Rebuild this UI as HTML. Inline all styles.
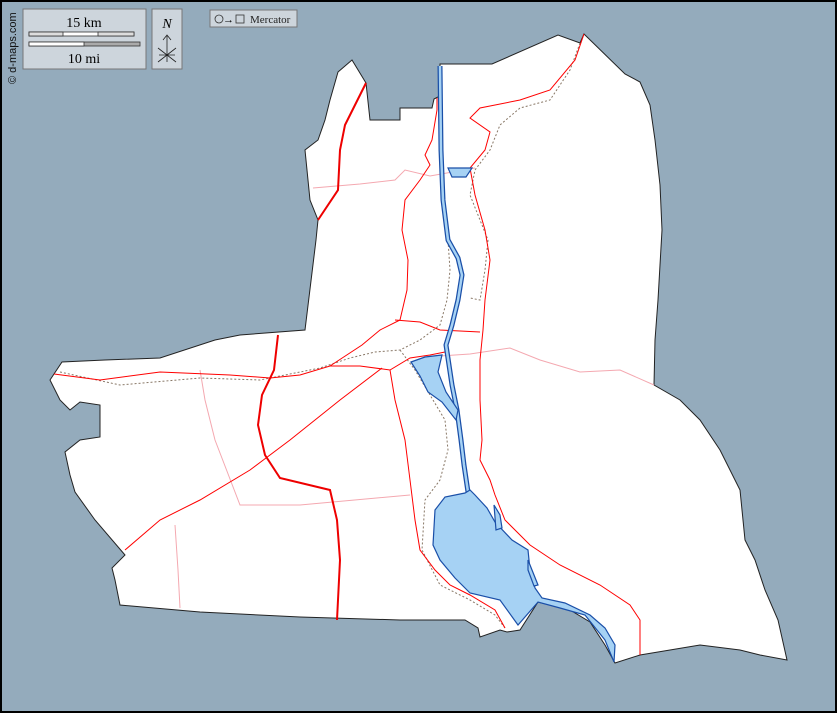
<!DOCTYPE html>
<html><head><meta charset="utf-8"><style>
html,body{margin:0;padding:0;background:#000;}
svg{display:block}
text{font-family:"Liberation Serif",serif}
</style></head><body>
<svg width="837" height="713" viewBox="0 0 837 713" xmlns="http://www.w3.org/2000/svg">
<rect x="0" y="0" width="837" height="713" fill="#000"/>
<rect x="2" y="2" width="833" height="709" fill="#94abbc"/>
<path d="M338,72 L352,60 L366,83 L370,120 L400,120 L400,108 L432,108 L434,99 L440,96 L440,64 L492,64 L558,35 L580,43 L584,34 L625,74 L640,82 L650,105 L655,140 L660,185 L662,230 L658,300 L655,340 L654,385 L680,400 L700,420 L720,450 L740,490 L745,540 L755,560 L765,590 L778,620 L787,660 L760,655 L740,650 L700,645 L640,655 L615,663 L605,645 L590,622 L570,610 L538,602 L520,630 L507,632 L500,630 L480,637 L478,628 L465,620 L400,620 L300,617 L200,612 L120,605 L115,580 L112,568 L125,555 L95,520 L75,492 L70,475 L65,452 L80,440 L100,437 L100,405 L80,402 L70,410 L60,400 L50,380 L62,362 L105,360 L160,358 L215,340 L240,335 L305,330 L316,240 L318,220 L310,200 L305,150 L318,140 L325,120 L330,100 Z" fill="#fff" stroke="#222" stroke-width="1"/>
<g fill="none" stroke="#f4a8b0" stroke-width="1">
<path d="M313,188 L360,184 L395,180 L405,170 L430,176 L475,168"/>
<path d="M440,356 L470,354 L510,348 L540,360 L580,372 L620,370 L654,385"/>
<path d="M200,370 L205,400 L215,440 L240,505 L300,505 L410,495"/>
<path d="M175,525 L178,570 L180,608"/>
</g>
<g fill="none" stroke="#887766" stroke-width="1" stroke-dasharray="2,2">
<path d="M60,372 L120,385 L200,378 L260,380 L320,368 L350,358 L375,352 L400,350 L420,340 L440,325 L447,300 L450,270 L448,240 L443,205"/>
<path d="M580,43 L570,70 L550,100 L520,108 L500,125 L490,150 L475,170 L470,195 L480,220 L488,240 L485,270 L480,300 L470,298"/>
<path d="M400,350 L415,370 L430,395 L445,420 L448,450 L440,480 L425,500 L422,550 L440,585 L470,600 L495,615 L505,628"/>
</g>
<g fill="none" stroke="#f00" stroke-width="1">
<path d="M54,374 L100,380 L160,372 L230,375 L270,378 L300,375 L330,366 L360,366 L390,370 L410,358 L430,355 L445,352"/>
<path d="M437,98 L437,110 L432,140 L425,155 L430,165 L420,180 L405,200 L402,230 L408,260 L407,290 L400,320 L380,330 L362,345 L330,366"/>
<path d="M395,320 L420,322 L440,330 L480,332"/>
<path d="M584,34 L575,60 L550,90 L520,100 L480,108 L470,118 L490,132 L485,150 L470,168 L475,195 L485,230 L490,260 L485,300 L483,330 L480,360 L480,400 L482,440 L480,460 L490,480 L495,495 L505,520 L530,545 L560,565 L600,585 L630,605 L640,620 L640,655"/>
<path d="M390,370 L395,400 L405,440 L410,480 L415,520 L420,550 L435,570 L450,585 L470,595 L495,610 L505,628"/>
<path d="M382,368 L340,400 L290,440 L250,470 L200,500 L160,520 L125,550"/>
</g>
<g fill="none" stroke="#e00" stroke-width="2">
<path d="M366,83 L355,105 L345,125 L340,150 L338,190 L318,220"/>
<path d="M278,335 L274,370 L262,395 L258,425 L265,455 L280,478 L330,490 L337,520 L340,560 L337,620"/>
</g>
<!-- river as double stroke -->
<path d="M440,66 L441,150 L443,200 L448,240 L458,258 L462,275 L458,300 L452,325 L446,345 L449,365 L452,385 L457,410 L461,440 L464,465 L468,492" fill="none" stroke="#1a4fa8" stroke-width="5" stroke-linejoin="round"/>
<path d="M440,66 L441,150 L443,200 L448,240 L458,258 L462,275 L458,300 L452,325 L446,345 L449,365 L452,385 L457,410 L461,440 L464,465 L468,492" fill="none" stroke="#a6d2f4" stroke-width="2.5" stroke-linejoin="round"/>
<g fill="#a6d2f4" stroke="#1a4fa8" stroke-width="1.2">
<path d="M411,362 L425,357 L442,355 L438,372 L446,392 L458,410 L456,420 L442,402 L428,392 L420,376 Z"/>
<path d="M470,490 L465,493 L445,497 L435,510 L433,545 L440,560 L455,578 L470,593 L500,600 L518,625 L538,602 L560,608 L585,615 L605,640 L614,662 L615,645 L605,628 L590,615 L565,603 L542,598 L535,588 L530,570 L528,550 L512,540 L495,522 L487,508 L475,495 Z"/>
<path d="M448,168 L472,168 L466,177 L452,177 Z"/>
<path d="M494,505 L500,515 L502,528 L496,530 Z"/>
<path d="M528,560 L532,570 L538,585 L534,586 L528,570 Z"/>
</g>
<g>
<rect x="23" y="9" width="123" height="60" fill="#cdd5dc" stroke="#777"/>
<text x="84" y="27" font-size="14" text-anchor="middle">15 km</text>
<rect x="29" y="32" width="105" height="4" fill="#fff" stroke="#333" stroke-width="0.8"/>
<rect x="29" y="32" width="34" height="4" fill="#ddd" stroke="#333" stroke-width="0.8"/>
<rect x="98" y="32" width="36" height="4" fill="#ddd" stroke="#333" stroke-width="0.8"/>
<rect x="29" y="42" width="111" height="4" fill="#aaa" stroke="#333" stroke-width="0.8"/>
<rect x="29" y="42" width="55" height="4" fill="#fff" stroke="#333" stroke-width="0.8"/>
<text x="84" y="63" font-size="14" text-anchor="middle">10 mi</text>
<rect x="152" y="9" width="30" height="60" fill="#cdd5dc" stroke="#777"/>
<text x="167" y="28" font-size="14" font-style="italic" text-anchor="middle">N</text>
<path d="M167,36 L167,62 M163,40 L167,35 L171,40 M158,48 L176,62 M176,48 L158,62 M159,55 L175,55" stroke="#222" stroke-width="0.8" fill="none"/>
<rect x="210" y="10" width="87" height="17" fill="#cdd5dc" stroke="#777"/>
<circle cx="219" cy="19" r="4" fill="none" stroke="#333" stroke-width="0.8"/>
<text x="223" y="23" font-size="11" font-family="Liberation Sans,sans-serif">→</text>
<rect x="236" y="15" width="8" height="8" fill="none" stroke="#333" stroke-width="0.8"/>
<text x="250" y="23" font-size="11" font-family="Liberation Sans,sans-serif" fill="#222">Mercator</text>
<text transform="translate(16,84) rotate(-90)" font-size="11" style="font-family:'Liberation Sans',sans-serif" fill="#111">© d-maps.com</text>
</g>
</svg>
</body></html>
